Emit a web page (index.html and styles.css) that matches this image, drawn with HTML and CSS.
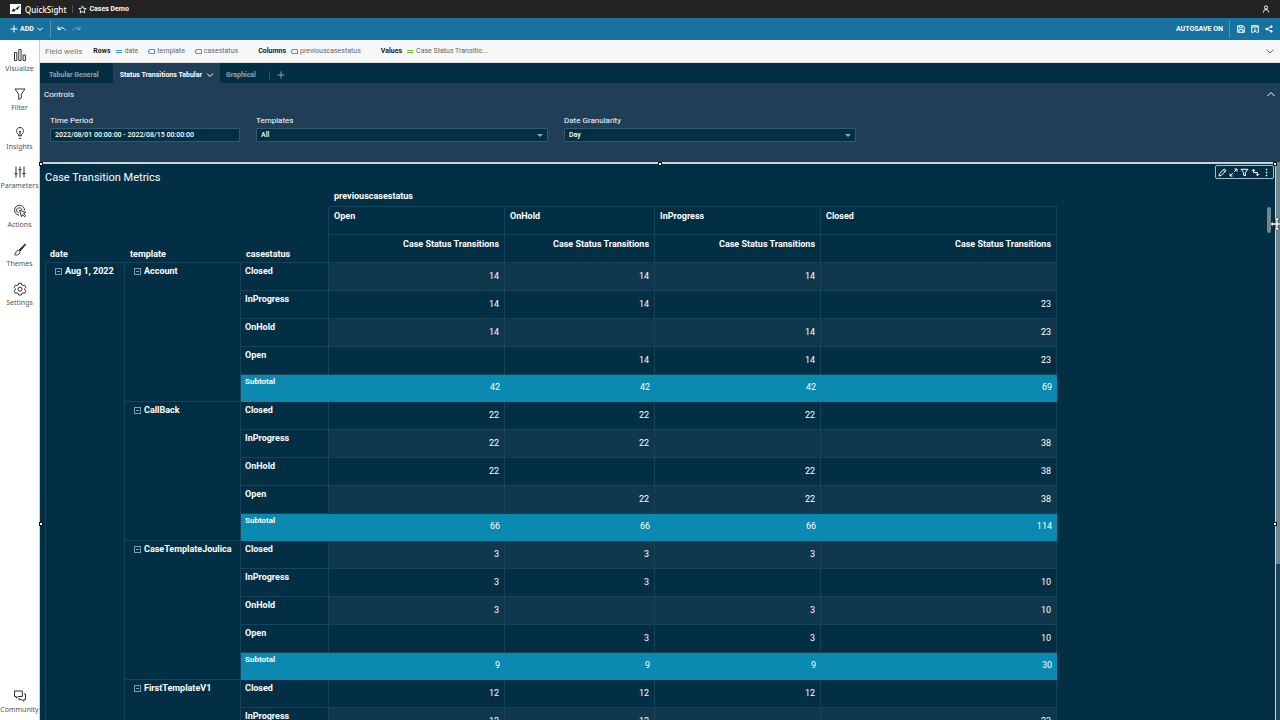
FILE: index.html
```
<!DOCTYPE html>
<html lang="en">
<head>
    <meta charset="UTF-8">
    <meta name="viewport" content="width=device-width, initial-scale=1.0">
    <title>Cases Demo - QuickSight</title>
    <link rel="stylesheet" href="styles.css">
</head>
<body>
    <header class="topbar">
        <svg class="logo" viewBox="0 0 11 10"><path fill="#fff" d="M0 0h11v10H0z"/><path fill="#232323" d="M1 7.500l2.500-3 1.300 1L9.500 1.500v1.200L7.500 6 6 5 4 8.500 3.200 7z"/></svg>
        <span class="brand">QuickSight</span>
        <span class="divider"></span>
        <svg class="star" viewBox="0 0 10 10"><path d="M5 1l1.200 2.700 2.900.3-2.200 1.900.7 2.900L5 7.300 2.400 8.800l.7-2.900L.9 4l2.900-.3z"/></svg>
        <span class="doc-name">Cases Demo</span>
        <button class="icon-btn user" aria-label="Account"><svg viewBox="0 0 8 8"><circle cx="4" cy="2.500" r="1.600"/><path d="M1.500 7.500C1.500 5.500 2.500 4.600 4 4.600s2.500.9 2.500 2.900"/></svg></button>
    </header>

    <div class="toolbar">
        <button class="add-btn">
            <svg viewBox="0 0 8 8"><path d="M4 .5v7M.5 4h7"/></svg>
            ADD
            <svg class="chevron" viewBox="0 0 8 8"><path d="M1.500 2.800L4 5.300l2.500-2.500"/></svg>
        </button>
        <span class="divider"></span>
        <button class="icon-btn" aria-label="Undo"><svg viewBox="0 0 10 8"><path d="M1 1.500v3h3M1.200 4.300C3.500 2 7 2.300 8.500 5.500"/></svg></button>
        <button class="icon-btn faded" aria-label="Redo"><svg viewBox="0 0 10 8"><path d="M9 1.500v3H6M8.800 4.300C6.500 2 3 2.300 1.500 5.500"/></svg></button>
        <span class="autosave">AUTOSAVE ON</span>
        <span class="divider"></span>
        <button class="icon-btn" aria-label="Save"><svg viewBox="0 0 8 8"><path d="M.7.700h5.100l1.500 1.500v5.100H.7zM2.300.800v2h2.900v-2M2 7.200V4.700h4v2.500"/></svg></button>
        <button class="icon-btn" aria-label="Export"><svg viewBox="0 0 8 8"><path d="M2.500 7.300H.7V.7h6.600v6.600H5.500M.7 2h6.600M4 3.300V7M2.600 5.700L4 7.100l1.400-1.400"/></svg></button>
        <button class="icon-btn" aria-label="Share"><svg viewBox="0 0 8 8"><path d="M6.300 1.700L1.700 4l4.600 2.300"/><g fill="#fff"><circle cx="1.600" cy="4" r=".9"/><circle cx="6.400" cy="1.600" r=".8"/><circle cx="6.400" cy="6.400" r=".8"/></g></svg></button>
    </div>

    <div class="workspace">
        <nav class="sidebar">
            <button class="nav-item"><svg viewBox="0 0 14 14"><path d="M1.500 4.500h2.300v8H1.500zM5.800 1.500h2.300v11H5.800zM10.100 7h2.300v5.500h-2.300z"/></svg>Visualize</button>
            <button class="nav-item"><svg viewBox="0 0 14 14"><path d="M2 2h10L8.300 7.200V11l-2.600 1.500V7.200z"/></svg>Filter</button>
            <button class="nav-item"><svg viewBox="0 0 14 14"><path d="M5.500 9.800V8.500C2.500 6.800 3 1.500 7 1.500s4.500 5.300 1.500 7v1.300zM5.700 12.300h2.600M7 5v4.500M5.900 5L7 6.200 8.100 5"/></svg>Insights</button>
            <button class="nav-item"><svg viewBox="0 0 14 14"><path d="M3 1.500v11M7 1.500v11M11 1.500v11M1.400 8.800h3.200M5.400 4.800h3.200M9.400 8.500h3.200"/></svg>Parameters</button>
            <button class="nav-item"><svg viewBox="0 0 14 14"><path d="M6 11.300C-.5 10 .5 1.300 6.500 1.300c3 0 5 2 5 5M5.500 8.800C2.500 8 3 3.800 6.300 3.800c1.500 0 2.500 1 2.700 2.200M6.500 6.200l6.300 2.300-2.300 1 2.300 2.300-1.100 1-2.200-2.200-1 2.200z"/></svg>Actions</button>
            <button class="nav-item"><svg viewBox="0 0 14 14"><path d="M12.800 1.400L7 8.300 5.800 7.200 12 1.200z" fill="#333"/><path d="M5.500 7.500C3 7 3.300 9.800 1.500 11.800c2.800.7 5.700-.5 5.300-3.200"/></svg>Themes</button>
            <button class="nav-item"><svg viewBox="0 0 14 14"><path d="M5.600 1.300h2.800l.4 1.700 1.100.6 1.700-.5 1.300 2.400-1.200 1.200v1.200l1.200 1.100-1.300 2.300-1.700-.4-1.100.6-.4 1.500H5.600l-.4-1.500-1.100-.6-1.700.4L1.100 9l1.200-1.100V6.700L1.100 5.500l1.300-2.400 1.700.5L5.200 3z"/><circle cx="7" cy="7.200" r="2"/></svg>Settings</button>
            <button class="nav-item community"><svg viewBox="0 0 14 14"><path d="M1.500 2h7.800v5.500H5L3.300 9.300V7.500H1.500zM10.800 5h1.700v5.600h-1.700v1.900L9 10.600H6V9"/></svg>Community</button>
        </nav>

        <main class="main">
            <section class="field-wells">
                <span class="wells-title">Field wells</span>
                <div class="well">
                    <b>Rows</b>
                    <span class="field"><i class="measure-icon"></i>date</span>
                    <span class="field"><i class="dim-icon"></i>template</span>
                    <span class="field"><i class="dim-icon"></i>casestatus</span>
                </div>
                <div class="well">
                    <b>Columns</b>
                    <span class="field"><i class="dim-icon"></i>previouscasestatus</span>
                </div>
                <div class="well">
                    <b>Values</b>
                    <span class="field"><i class="measure-icon green"></i>Case Status Transitio...</span>
                </div>
                <button class="icon-btn collapse" aria-label="Expand field wells"><svg viewBox="0 0 10 8"><path d="M1.500 2.500L5 6l3.500-3.500"/></svg></button>
            </section>

            <div class="tabs">
                <button class="tab">Tabular General</button>
                <button class="tab active">Status Transitions Tabular <svg viewBox="0 0 8 8"><path d="M1 2.500l3 3 3-3"/></svg></button>
                <button class="tab">Graphical</button>
                <span class="divider"></span>
                <button class="tab-add" aria-label="Add sheet"><svg viewBox="0 0 8 8"><path d="M4 .5v7M.5 4h7"/></svg></button>
            </div>

            <section class="controls">
                <div class="controls-head">
                    <span>Controls</span>
                    <button class="icon-btn" aria-label="Collapse controls"><svg viewBox="0 0 10 8"><path d="M1.500 6L5 2.500 8.500 6"/></svg></button>
                </div>
                <div class="controls-row">
                    <div class="control period">
                        <label for="period">Time Period</label>
                        <input type="text" id="period" value="2022/08/01 00:00:00 - 2022/08/15 00:00:00">
                    </div>
                    <div class="control">
                        <label for="templates">Templates</label>
                        <div class="select-wrap"><select id="templates"><option>All</option></select></div>
                    </div>
                    <div class="control">
                        <label for="granularity">Date Granularity</label>
                        <div class="select-wrap"><select id="granularity"><option>Day</option></select></div>
                    </div>
                </div>
            </section>

            <section class="sheet">
                <div class="visual">
                    <i class="handle top-left"></i>
                    <i class="handle top"></i>
                    <i class="handle top-right"></i>
                    <i class="handle left"></i>
                    <i class="handle right"></i>
                    <div class="visual-menu">
                        <button aria-label="Edit"><svg viewBox="0 0 9 9"><path d="M1 8l.6-2.300L6.300 1l1.700 1.700L3.300 7.400zM5.300 2L7 3.700"/></svg></button>
                        <button aria-label="Maximize"><svg viewBox="0 0 9 9"><path d="M5.500 1H8v2.500M8 1L5.200 3.800M1 5.500V8h2.500M1 8l2.800-2.800"/></svg></button>
                        <button aria-label="Filter"><svg viewBox="0 0 9 9"><path d="M1 1.300h7L5.400 4.500v3.300l-1.800-.6V4.500z"/></svg></button>
                        <button aria-label="Sort"><svg viewBox="0 0 9 9"><path d="M.8 3l1.700-1.700L4.200 3M2.500 1.500V4.500h4v3M4.800 6l1.700 1.700L8.200 6"/></svg></button>
                        <button aria-label="More"><svg viewBox="0 0 9 9"><path d="M4.500.8v1.400M4.500 3.800v1.400M4.500 6.800v1.400" stroke-width="1.400"/></svg></button>
                    </div>
                    <h1>Case Transition Metrics</h1>
                    <table class="pivot">
                        <colgroup><col class="c-date"><col class="c-template"><col class="c-status"><col class="c-open"><col class="c-hold"><col class="c-progress"><col class="c-closed"></colgroup>
                        <thead>
                            <tr class="dim-row"><td colspan="3"></td><th colspan="4">previouscasestatus</th></tr>
                            <tr class="group-row"><td colspan="3"></td><th>Open</th><th>OnHold</th><th>InProgress</th><th>Closed</th></tr>
                            <tr class="measure-row"><th class="key">date</th><th class="key">template</th><th class="key last">casestatus</th><th>Case Status Transitions</th><th>Case Status Transitions</th><th>Case Status Transitions</th><th>Case Status Transitions</th></tr>
                        </thead>
                        <tbody>
                            <tr class="alt"><th class="parent date" rowspan="17"><button class="toggle" aria-label="Collapse"></button>Aug 1, 2022</th><th class="parent" rowspan="5"><button class="toggle" aria-label="Collapse"></button>Account</th><th>Closed</th><td>14</td><td>14</td><td>14</td><td></td></tr>
                            <tr><th>InProgress</th><td>14</td><td>14</td><td></td><td>23</td></tr>
                            <tr class="alt"><th>OnHold</th><td>14</td><td></td><td>14</td><td>23</td></tr>
                            <tr><th>Open</th><td></td><td>14</td><td>14</td><td>23</td></tr>
                            <tr class="subtotal"><th>Subtotal</th><td>42</td><td>42</td><td>42</td><td>69</td></tr>

                            <tr><th class="parent" rowspan="5"><button class="toggle" aria-label="Collapse"></button>CallBack</th><th>Closed</th><td>22</td><td>22</td><td>22</td><td></td></tr>
                            <tr class="alt"><th>InProgress</th><td>22</td><td>22</td><td></td><td>38</td></tr>
                            <tr><th>OnHold</th><td>22</td><td></td><td>22</td><td>38</td></tr>
                            <tr class="alt"><th>Open</th><td></td><td>22</td><td>22</td><td>38</td></tr>
                            <tr class="subtotal"><th>Subtotal</th><td>66</td><td>66</td><td>66</td><td>114</td></tr>

                            <tr class="alt"><th class="parent" rowspan="5"><button class="toggle" aria-label="Collapse"></button>CaseTemplateJoulica</th><th>Closed</th><td>3</td><td>3</td><td>3</td><td></td></tr>
                            <tr><th>InProgress</th><td>3</td><td>3</td><td></td><td>10</td></tr>
                            <tr class="alt"><th>OnHold</th><td>3</td><td></td><td>3</td><td>10</td></tr>
                            <tr><th>Open</th><td></td><td>3</td><td>3</td><td>10</td></tr>
                            <tr class="subtotal"><th>Subtotal</th><td>9</td><td>9</td><td>9</td><td>30</td></tr>

                            <tr><th class="parent" rowspan="2"><button class="toggle" aria-label="Collapse"></button>FirstTemplateV1</th><th>Closed</th><td>12</td><td>12</td><td>12</td><td></td></tr>
                            <tr class="alt"><th>InProgress</th><td>12</td><td>12</td><td></td><td>23</td></tr>
                        </tbody>
                    </table>
                    <span class="table-scroll"></span>
                </div>
                <div class="page-scroll"><span></span></div>
                <svg class="cursor" viewBox="0 0 14 14"><path d="M7 0l2.500 3H8v3h3V4.500L14 7l-3 2.500V8H8v3h1.500L7 14l-2.500-3H6V8H3v1.500L0 7l3-2.500V6h3V3H4.500z" fill="#fff" stroke="#111" stroke-width=".5"/></svg>
            </section>
        </main>
    </div>
</body>
</html>
```
FILE: styles.css
```
:root {
    --navy: #032f45;
    --panel: #203e56;
    --line: #18425a;
    --blue: #1772a0;
    --subtotal: #0a89b1;
    --alt: #0f384d;
}

* {
    box-sizing: border-box;
}

body {
    margin: 0;
    height: 100vh;
    display: flex;
    flex-direction: column;
    overflow: hidden;
    font-family: Roboto, 'Liberation Sans', sans-serif;
    font-size: 9px;
    color: white;
    background: var(--navy);
}

button {
    border: none;
    padding: 0;
    background: none;
    color: inherit;
    font: inherit;
    cursor: pointer;
}

svg {
    display: block;
    flex: none;
    fill: none;
    stroke: currentColor;
}

.icon-btn svg {
    width: 10px;
    height: 8px;
}

/* Top bars */
.topbar {
    height: 18px;
    flex: none;
    display: flex;
    align-items: center;
    padding: 0 9px 0 10px;
    background: #232323;
}

.logo {
    width: 11px;
    height: 10px;
    stroke: none;
    margin-right: 4px;
}

.brand {
    font-family: 'Noto Sans', sans-serif;
    font-size: 8px;
    font-weight: 500;
}

.topbar .divider {
    width: 1px;
    height: 8px;
    margin: 0 5px 0 6px;
    background: #555;
}

.star {
    width: 9px;
    height: 9px;
    margin-right: 2px;
}

.doc-name {
    font-size: 7px;
    font-weight: 700;
}

.user {
    margin-left: auto;
}

.toolbar {
    height: 22px;
    flex: none;
    display: flex;
    align-items: center;
    gap: 4px;
    padding: 0 6px 0 10px;
    background: var(--blue);
    font-size: 7px;
    font-weight: 700;
}

.toolbar .divider {
    width: 1px;
    height: 18px;
    margin: 0 2px;
    background: #4f96bb;
}

.add-btn {
    display: flex;
    align-items: center;
    gap: 2px;
}

.add-btn svg {
    width: 8px;
    height: 8px;
}

.faded {
    opacity: 0.4;
}

.autosave {
    margin-left: auto;
}

/* Sidebar */
.workspace {
    flex: 1;
    min-height: 0;
    display: flex;
}

.sidebar {
    width: 40px;
    flex: none;
    display: flex;
    flex-direction: column;
    padding: 8px 0 3px;
    background: white;
    border-right: 1px solid #ccc;
    font-family: 'Noto Sans', sans-serif;
    font-size: 7px;
    color: #555;
}

.nav-item {
    height: 39px;
    flex: none;
    display: flex;
    flex-direction: column;
    align-items: center;
    gap: 2px;
    line-height: 10px;
}

.nav-item svg {
    width: 14px;
    height: 14px;
    stroke: #333;
}

.community {
    height: 28px;
    margin-top: auto;
}

.main {
    flex: 1;
    min-width: 0;
    display: flex;
    flex-direction: column;
}

/* Field wells */
.field-wells {
    height: 23px;
    flex: none;
    display: flex;
    align-items: center;
    padding: 0 5px;
    background: #f7f7f7;
    border-bottom: 1px solid #ddd;
    font-size: 7px;
    color: #666;
}

.wells-title {
    font-size: 8px;
    margin-right: 11px;
    color: #777;
}

.well {
    display: flex;
    align-items: center;
    margin-right: 20px;
}

.well b {
    color: #222;
    margin-right: 5px;
}

.field {
    display: flex;
    align-items: center;
    gap: 2px;
}

.field + .field {
    margin-left: 10px;
}

.dim-icon {
    width: 7px;
    height: 5px;
    border: 1px solid #379ec9;
    border-radius: 3px 1px 1px 3px;
}

.measure-icon {
    width: 6px;
    height: 3px;
    margin-right: 1px;
    border: solid #379ec9;
    border-width: 1px 0;
}

.measure-icon.green {
    border-color: #6abf2e;
}

.collapse {
    margin-left: auto;
}

/* Sheet tabs */
.tabs {
    height: 20px;
    flex: none;
    display: flex;
    align-items: stretch;
    font-size: 7px;
    font-weight: 700;
    color: #8ea3b0;
}

.tab {
    display: flex;
    align-items: center;
    gap: 4px;
    padding: 4px 6px 0 9px;
}

.tab:first-child {
    padding-right: 14px;
}

.tab.active {
    color: white;
    background: var(--panel);
    padding-left: 7px;
}

.tab.active + .tab {
    padding-left: 6px;
}

.tab svg,
.tab-add svg {
    width: 8px;
    height: 8px;
}

.tabs .divider {
    width: 1px;
    height: 8px;
    margin: 8px 0 0 7px;
    background: #2a5468;
}

.tab-add {
    padding: 4px 7px 0;
}

/* Controls */
.controls {
    height: 79px;
    flex: none;
    padding: 5px 4px;
    background: var(--panel);
}

.controls-head {
    display: flex;
    justify-content: space-between;
    align-items: center;
    height: 12px;
    font-size: 8px;
}

.controls-row {
    display: flex;
    gap: 16px;
    padding: 15px 0 0 6px;
}

.control {
    width: 292px;
}

.control.period {
    width: 190px;
}

.control label {
    display: block;
    line-height: 12px;
    margin-bottom: 1px;
    font-size: 8px;
}

.control input,
.control select {
    display: block;
    width: 100%;
    height: 14px;
    padding: 0 4px;
    border: 1px solid #2e5b70;
    border-radius: 1px;
    background: var(--navy);
    color: white;
    font-family: inherit;
    font-size: 7px;
    font-weight: 500;
    appearance: none;
}

.select-wrap {
    position: relative;
}

.select-wrap::after {
    content: '';
    position: absolute;
    right: 5px;
    top: 6px;
    border: 3px solid transparent;
    border-top-color: #8fa9b8;
    border-bottom: none;
}

/* Sheet and the selected visual */
.sheet {
    flex: 1;
    min-height: 0;
    display: flex;
    position: relative;
}

.visual {
    flex: 1;
    min-width: 0;
    position: relative;
    padding: 6px 5px 0;
    border: solid #c8d3da;
    border-width: 2px 1px 0 0;
}

.visual h1 {
    margin: 0;
    height: 19px;
    line-height: 16px;
    font-size: 11px;
    font-weight: 400;
}

.handle {
    position: absolute;
    width: 4px;
    height: 4px;
    border: 1px solid #111;
    background: white;
}

.top-left {
    left: -1px;
    top: -2px;
}

.top {
    left: 50%;
    top: -2px;
}

.top-right {
    right: -2px;
    top: -2px;
}

.left {
    left: -1px;
    top: calc(50% + 80px);
}

.right {
    right: -2px;
    top: calc(50% + 80px);
}

.visual-menu {
    position: absolute;
    right: 1px;
    top: 1px;
    height: 14px;
    display: flex;
    align-items: center;
    gap: 2px;
    padding: 0 2px;
    border: 1px solid #a9bcc7;
    border-radius: 2px;
}

.visual-menu svg {
    width: 9px;
    height: 9px;
}

.table-scroll {
    position: absolute;
    right: 4px;
    top: 43px;
    width: 4px;
    height: 26px;
    border-radius: 2px;
    background: #6d8795;
}

.page-scroll {
    width: 4px;
    background: #1d4459;
}

.page-scroll span {
    display: block;
    height: 72%;
    background: #718590;
}

.cursor {
    position: absolute;
    right: -4px;
    top: 55px;
    width: 14px;
    height: 14px;
}

/* Pivot table */
.pivot {
    width: 1012px;
    table-layout: fixed;
    border-collapse: separate;
    border-spacing: 0;
    line-height: 12px;
}

.c-date { width: 80px; }
.c-template { width: 116px; }
.c-status { width: 88px; }
.c-open { width: 176px; }
.c-hold { width: 150px; }
.c-progress { width: 166px; }
.c-closed { width: 236px; }

.pivot th,
.pivot td {
    height: 28px;
    padding: 0 5px;
    border: solid var(--line);
    border-width: 0 1px 1px 0;
    font-weight: 700;
    text-align: left;
    vertical-align: top;
}

.pivot .dim-row th,
.pivot .dim-row td {
    height: 18px;
    border-right: none;
}

.pivot .dim-row th {
    padding-top: 1px;
}

.pivot .dim-row td {
    border: none;
}

.pivot .group-row td {
    border-bottom: none;
}

.pivot .group-row th {
    padding-top: 3px;
}

.pivot .measure-row th {
    padding-top: 3px;
    text-align: right;
}

.pivot .measure-row .key {
    padding-bottom: 2px;
    text-align: left;
    vertical-align: bottom;
    border-right: none;
}

.pivot .measure-row .last {
    border-right: 1px solid var(--line);
}

.pivot tbody th {
    padding: 2px 4px 0;
}

.pivot tbody td {
    padding-bottom: 2px;
    font-weight: 400;
    text-align: right;
    vertical-align: middle;
}

.pivot tbody .parent {
    padding-left: 9px;
}

.pivot tbody .date {
    border-left: 1px solid var(--line);
}

.alt td {
    background: var(--alt);
}

.pivot .subtotal th,
.pivot .subtotal td {
    height: 27px;
    background: var(--subtotal);
    border-color: var(--subtotal);
}

.pivot .subtotal th {
    padding-top: 1px;
    font-size: 8px;
}

.pivot .subtotal td {
    padding-right: 4px;
}

.toggle {
    position: relative;
    display: inline-block;
    width: 7px;
    height: 7px;
    margin-right: 3px;
    border: 1px solid #7f9bab;
    vertical-align: 0;
}

.toggle::after {
    content: '';
    position: absolute;
    left: 1px;
    right: 1px;
    top: 2px;
    height: 1px;
    background: #7f9bab;
}
```
